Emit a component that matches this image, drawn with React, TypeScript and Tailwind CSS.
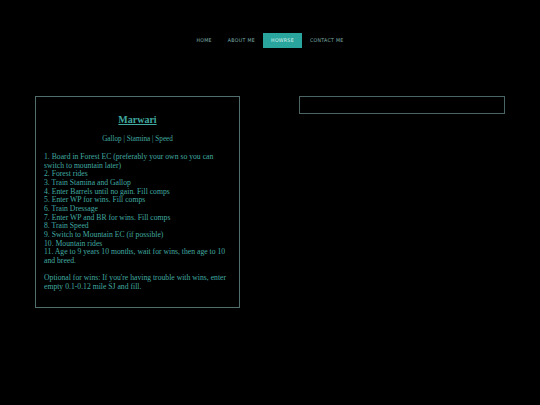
import React from "react";

export default function App() {
  const steps = [
    "1. Board in Forest EC (preferably your own so you can switch to mountain later)",
    "2. Forest rides",
    "3. Train Stamina and Gallop",
    "4. Enter Barrels until no gain. Fill comps",
    "5. Enter WP for wins. Fill comps",
    "6. Train Dressage",
    "7. Enter WP and BR for wins. Fill comps",
    "8. Train Speed",
    "9. Switch to Mountain EC (if possible)",
    "10. Mountain rides",
    "11. Age to 9 years 10 months, wait for wins, then age to 10 and breed.",
  ];
  const nav = ["HOME", "ABOUT ME", "HOWRSE", "CONTACT ME"];
  return (
    <div className="w-[540px] h-[405px] bg-black overflow-hidden">
      <nav className="flex justify-center pt-[33px]">
        {nav.map((n) => (
          <div
            key={n}
            className={`h-[15px] px-[8px] pt-[1px] flex items-center font-['DejaVu_Sans_Condensed',sans-serif] text-[5.2px] tracking-[0.06em] ${
              n === "HOWRSE" ? "bg-[#2aa59d] text-[#d8f0ee]" : "text-[#7fb0ac]"
            }`}
          >
            {n}
          </div>
        ))}
      </nav>
      <div className="flex gap-[59px] pl-[35px] pt-[48px] items-start">
        <div className="w-[205px] h-[212px] shrink-0 border border-[#4f6e6c] px-[8px] pt-[17px] font-['Liberation_Serif',serif] text-[#40aaa1]">
          <div className="text-center text-[10px] font-bold underline leading-[12px]">Marwari</div>
          <div className="text-center text-[7.2px] leading-[9px] mt-[9px]">Gallop | Stamina | Speed</div>
          <div className="mt-[9px] text-[7.7px] leading-[8.65px]">
            {steps.map((s) => (
              <div key={s}>{s}</div>
            ))}
            <div className="mt-[8.65px]">
              Optional for wins: If you're having trouble with wins, enter empty 0.1-0.12 mile SJ and fill.
            </div>
          </div>
        </div>
        <div className="w-[206px] h-[18px] shrink-0 border border-[#4a6563]" />
      </div>
    </div>
  );
}
